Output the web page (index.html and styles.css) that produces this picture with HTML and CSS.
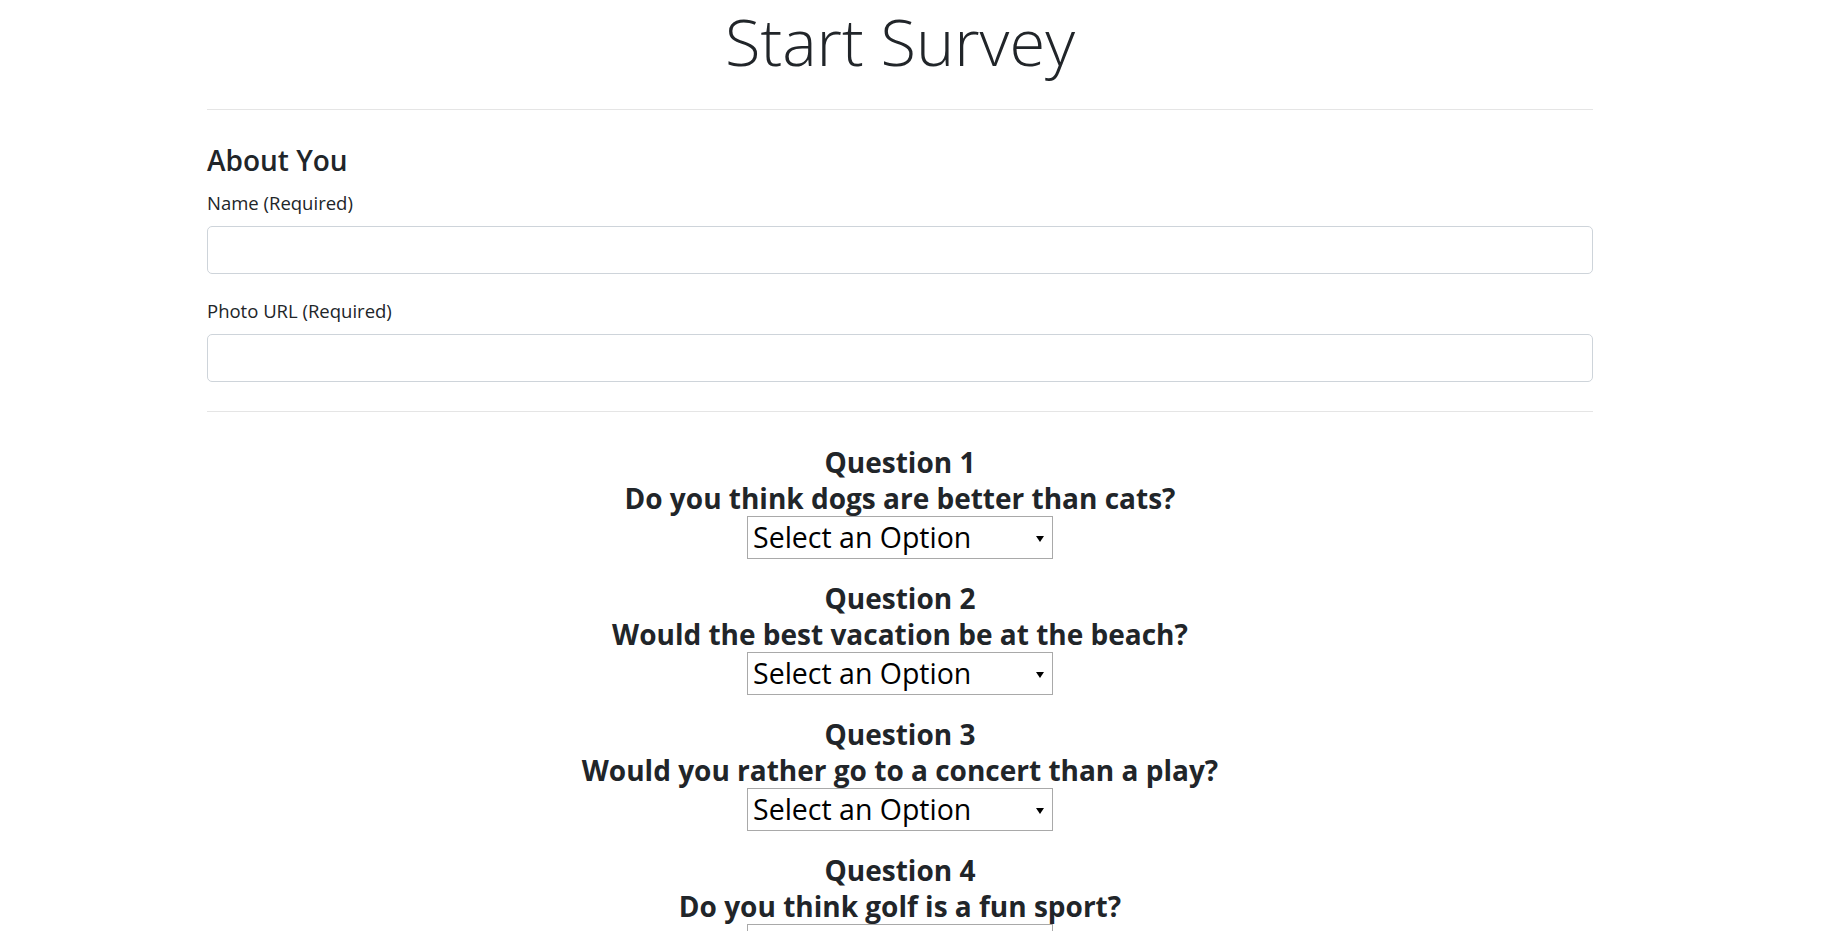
FILE: index.html
```html
<!DOCTYPE html>
<html lang="en">
<head>
<meta charset="utf-8">
<title>Start Survey</title>
<link rel="stylesheet" href="styles.css">
</head>
<body>
<div class="page">
  <h1 class="title">Start Survey</h1>
  <hr class="rule rule-top">
  <section class="about">
    <h4 class="section-title">About You</h4>
    <div class="field">
      <label class="field-label" for="name">Name (Required)</label>
      <input class="text-input" id="name" type="text">
    </div>
    <div class="field">
      <label class="field-label" for="photo">Photo URL (Required)</label>
      <input class="text-input" id="photo" type="text">
    </div>
  </section>
  <hr class="rule rule-mid">
  <div class="questions">
    <div class="question">
      <h3 class="q-title">Question 1<br>Do you think dogs are better than cats?</h3>
      <span class="select-wrap"><select class="q-select"><option>Select an Option</option><option>1 (Strongly Disagree)</option><option>2</option><option>3</option><option>4</option><option>5 (Strongly Agree)</option></select></span>
    </div>
    <div class="question">
      <h3 class="q-title">Question 2<br>Would the best vacation be at the beach?</h3>
      <span class="select-wrap"><select class="q-select"><option>Select an Option</option><option>1 (Strongly Disagree)</option><option>2</option><option>3</option><option>4</option><option>5 (Strongly Agree)</option></select></span>
    </div>
    <div class="question">
      <h3 class="q-title">Question 3<br>Would you rather go to a concert than a play?</h3>
      <span class="select-wrap"><select class="q-select"><option>Select an Option</option><option>1 (Strongly Disagree)</option><option>2</option><option>3</option><option>4</option><option>5 (Strongly Agree)</option></select></span>
    </div>
    <div class="question">
      <h3 class="q-title">Question 4<br>Do you think golf is a fun sport?</h3>
      <span class="select-wrap"><select class="q-select"><option>Select an Option</option><option>1 (Strongly Disagree)</option><option>2</option><option>3</option><option>4</option><option>5 (Strongly Agree)</option></select></span>
    </div>
  </div>
</div>
</body>
</html>
```
FILE: styles.css
```css
html, body {
  margin: 0;
  padding: 0;
  background: #fff;
}
body {
  font-family: "Open Sans", "Noto Sans", sans-serif;
  color: #212529;
}
.page {
  width: 1386px;
  margin-left: 207px;
}
.title {
  margin: 0;
  font-size: 65px;
  font-weight: 300;
  line-height: 82px;
  text-align: center;
  color: #212529;
}
.rule {
  border: 0;
  border-top: 1px solid rgba(0, 0, 0, 0.1);
  height: 0;
  margin: 0;
}
.rule-top {
  margin-top: 27px;
}
.about {
  padding-top: 35px;
}
.section-title {
  margin: 0 0 16px;
  font-size: 28px;
  font-weight: 600;
  line-height: 30px;
}
.field {
  display: flex;
  flex-direction: column;
  margin-bottom: 25px;
}
.field:last-child {
  margin-bottom: 29px;
}
.field-label {
  font-size: 18.5px;
  line-height: 24px;
  margin-bottom: 11px;
}
.text-input {
  box-sizing: border-box;
  width: 100%;
  height: 48px;
  border: 1px solid #ced4da;
  border-radius: 5px;
  background: #fff;
  font-family: inherit;
  font-size: 20px;
  padding: 8px 16px;
}
.questions {
  display: flex;
  flex-direction: column;
  gap: 21px;
  padding-top: 32px;
  padding-bottom: 40px;
}
.question {
  display: flex;
  flex-direction: column;
  align-items: center;
}
.q-title {
  margin: 0;
  font-size: 28px;
  font-weight: 700;
  line-height: 36px;
  text-align: center;
  color: #212529;
}
.select-wrap {
  position: relative;
  display: block;
  width: 306px;
  height: 43px;
}
.select-wrap::after {
  content: "";
  position: absolute;
  right: 9px;
  top: 20px;
  width: 0;
  height: 0;
  border-left: 4px solid transparent;
  border-right: 4px solid transparent;
  border-top: 6px solid #000;
  pointer-events: none;
}
.q-select {
  -webkit-appearance: none;
  appearance: none;
  box-sizing: border-box;
  width: 306px;
  height: 43px;
  margin: 0;
  padding: 0 0 0 5px;
  border: 1px solid #a9a9a9;
  border-radius: 0;
  background: #fff;
  color: #000;
  font-family: "Open Sans", "Noto Sans", sans-serif;
  font-size: 28.5px;
  line-height: 41px;
}
```
